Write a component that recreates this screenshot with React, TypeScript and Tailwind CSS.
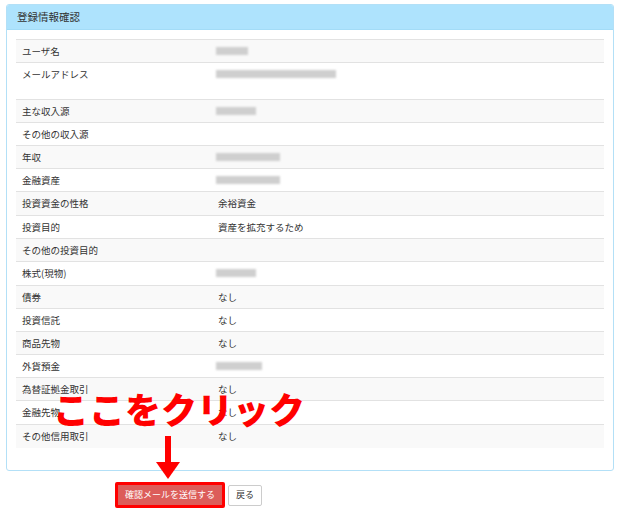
const font = { fontFamily: '"Noto Sans CJK JP", "Noto Sans", sans-serif' };

type Row = { label: string; value?: string; blur?: number; h: number };

const rows: Row[] = [
  { label: 'ユーザ名', blur: 32, h: 23 },
  { label: 'メールアドレス', blur: 120, h: 37 },
  { label: '主な収入源', blur: 40, h: 23 },
  { label: 'その他の収入源', h: 23 },
  { label: '年収', blur: 64, h: 23 },
  { label: '金融資産', blur: 64, h: 23 },
  { label: '投資資金の性格', value: '余裕資金', h: 24 },
  { label: '投資目的', value: '資産を拡充するため', h: 23 },
  { label: 'その他の投資目的', h: 23 },
  { label: '株式(現物)', blur: 40, h: 24 },
  { label: '債券', value: 'なし', h: 23 },
  { label: '投資信託', value: 'なし', h: 23 },
  { label: '商品先物', value: 'なし', h: 23 },
  { label: '外貨預金', blur: 46, h: 23 },
  { label: '為替証拠金取引', value: 'なし', h: 23 },
  { label: '金融先物', value: 'なし', h: 24 },
  { label: 'その他信用取引', value: 'なし', h: 24 },
];

export default function App() {
  return (
    <div className="relative w-[620px] h-[524px] bg-white text-[#333]" style={font}>
      <div className="pt-[4px] pl-[6px]">
        {/* panel */}
        <div className="w-[608px] h-[467px] border border-[#b3e0f7] rounded-[3px] overflow-hidden">
          <div className="h-[25px] bg-[#aee3fd] border-b border-[#a3dcf7] flex items-center pl-[10px] text-[10.5px] text-[#333]">
            登録情報確認
          </div>
          <div className="pt-[9px] px-[9px]">
            <div className="w-[588px]">
              {rows.map((r, i) => (
                <div
                  key={r.label}
                  className={`flex border-t border-[#e2e2e2] text-[9.5px] leading-[13px] ${i % 2 === 0 ? 'bg-[#f9f9f9]' : 'bg-white'}`}
                  style={{ height: r.h }}
                >
                  <div className="w-[200px] pl-[6px] pt-[5px]">{r.label}</div>
                  <div className="flex-1 pt-[5px]">
                    {r.value && <span className="pl-[2px]">{r.value}</span>}
                    {r.blur && (
                      <div
                        className="mt-[2px] h-[8px] bg-[#cfcfcf] blur-[1px]"
                        style={{ width: r.blur }}
                      />
                    )}
                  </div>
                </div>
              ))}
            </div>
          </div>
        </div>

        {/* buttons */}
        <div className="mt-[11px] pl-[109px] flex items-center gap-[3px]">
          <div className="border-[3px] border-[#f00] rounded-[2px]">
            <div className="h-[20px] px-[7px] flex items-center bg-[#dc5d5a] text-white text-[9px]">
              確認メールを送信する
            </div>
          </div>
          <div className="h-[21px] px-[7px] flex items-center border border-[#ccc] bg-white text-[9px] rounded-[2px]">
            戻る
          </div>
        </div>
      </div>

      {/* annotation overlay */}
      <div className="absolute left-[53px] top-[390px] text-[36px] font-black text-[#f00] leading-none">
        ここをクリック
      </div>
      <svg className="absolute left-[155px] top-[436px]" width="26" height="44" viewBox="0 0 26 44">
        <rect x="10" y="0" width="6" height="28" fill="#f00" />
        <polygon points="1,26 25,26 13,43" fill="#f00" />
      </svg>
    </div>
  );
}
